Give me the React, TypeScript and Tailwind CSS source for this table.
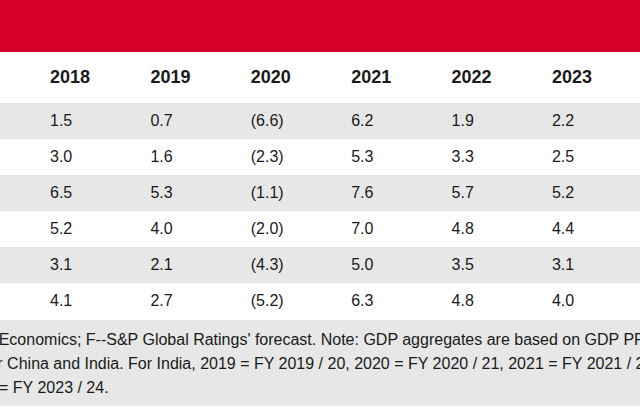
const years = ["2018", "2019", "2020", "2021", "2022", "2023"]

const rows = [
  ["1.5", "0.7", "(6.6)", "6.2", "1.9", "2.2"],
  ["3.0", "1.6", "(2.3)", "5.3", "3.3", "2.5"],
  ["6.5", "5.3", "(1.1)", "7.6", "5.7", "5.2"],
  ["5.2", "4.0", "(2.0)", "7.0", "4.8", "4.4"],
  ["3.1", "2.1", "(4.3)", "5.0", "3.5", "3.1"],
  ["4.1", "2.7", "(5.2)", "6.3", "4.8", "4.0"],
]

const App = () => {
  return (
    <div
      className="w-[640px] h-[416px] overflow-hidden bg-white text-[#1a1a1a]"
      style={{ fontFamily: '"Liberation Sans", Arial, sans-serif' }}
    >
      {/* Red title band */}
      <div className="h-[52px] bg-[#d6002b]" />

      {/* Year header */}
      <div className="flex h-[51px] items-center pl-[50px]">
        {years.map((y) => (
          <div key={y} className="w-[100.4px] shrink-0 text-[18px] font-bold">
            {y}
          </div>
        ))}
      </div>

      {/* Data rows */}
      {rows.map((row, i) => (
        <div
          key={i}
          className={`flex h-[36px] items-center pl-[50px] ${i % 2 === 0 ? "bg-[#e6e7e6]" : "bg-white"}`}
        >
          {row.map((v, j) => (
            <div key={j} className="w-[100.4px] shrink-0 text-[16px]">
              {v}
            </div>
          ))}
        </div>
      ))}

      {/* Footnote */}
      <div className="mt-px h-[86px] bg-[#e6e7e6] pt-2 text-[16px] leading-6 whitespace-nowrap">
        <div className="-ml-[52px]">
          Global Economics; F--S&amp;P Global Ratings' forecast. Note: GDP aggregates are based on GDP PPP weights.
        </div>
        <div className="-ml-[16px]">
          for China and India. For India, 2019 = FY 2019 / 20, 2020 = FY 2020 / 21, 2021 = FY 2021 / 22, 2022
        </div>
        <div className="-ml-[41px]">2023 = FY 2023 / 24.</div>
      </div>
    </div>
  )
}

export default App
